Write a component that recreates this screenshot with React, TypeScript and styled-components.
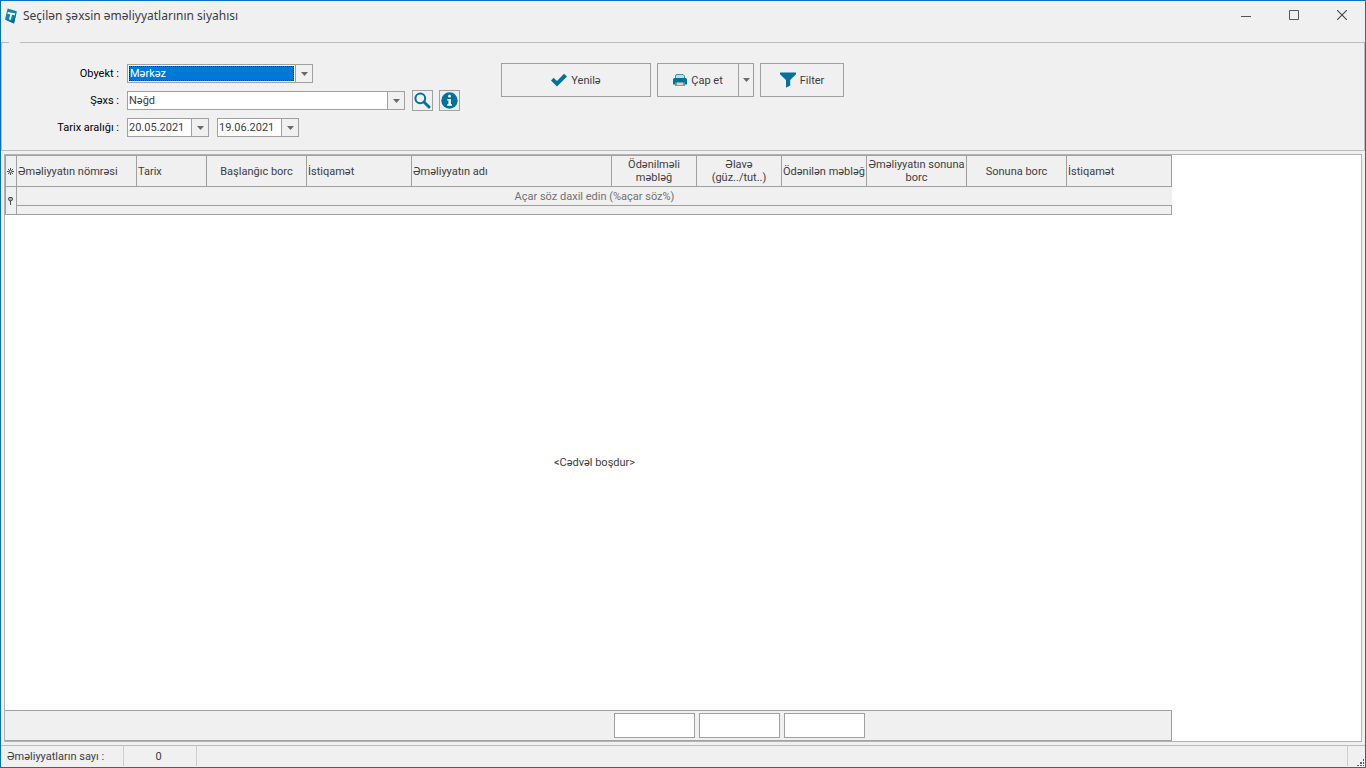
import React from "react";
import styled, { createGlobalStyle, css } from "styled-components";

const LINE = "#a0a0a0";
const SOFT_LINE = "#bcbcbc";
const PANEL = "#f0f0f0";
const TEXT = "#3c3c42";
const ACCENT = "#00739c";

const Global = createGlobalStyle`
  *, *::before, *::after { box-sizing: border-box; }
  body { margin: 0; background: ${PANEL}; }
  body, button, input, select, table {
    font-family: Roboto, "Noto Sans", sans-serif;
    font-size: 11px;
    line-height: 13px;
    color: ${TEXT};
  }
`;

const Window = styled.div`
  display: flex;
  flex-direction: column;
  min-height: 100vh;
  border: 1px solid #0a70c0;
  background: ${PANEL};
`;

const TitleBar = styled.header`
  display: flex;
  align-items: center;
  height: 29px;
  margin-bottom: 12px;
  padding-left: 4px;
`;

const Title = styled.h1`
  flex: 1;
  margin: 0 0 0 6px;
  font: 400 12px/16px "Noto Sans", sans-serif;
`;

const CaptionButton = styled.button`
  display: flex;
  align-items: center;
  justify-content: center;
  width: 48px;
  height: 29px;
  padding: 0 0 2px 2px;
  border: 0;
  background: transparent;
`;

const Group = styled.section`
  position: relative;
  display: flex;
  align-items: flex-start;
  gap: 41px;
  height: 109px;
  padding: 20px 16px 0 0;
  border: 1px solid ${SOFT_LINE};

  &::before {
    content: "";
    position: absolute;
    top: -1px;
    left: 7px;
    width: 11px;
    height: 1px;
    background: ${PANEL};
  }
`;

const Fields = styled.form`
  display: grid;
  grid-template-columns: 117px auto;
  grid-auto-rows: 21px;
  gap: 6px 8px;
  align-items: center;
`;

const Label = styled.label`
  text-align: right;
  color: #000;
`;

const FieldRow = styled.div<{ $gap?: number }>`
  display: flex;
  align-items: center;
  gap: ${(p) => p.$gap ?? 7}px;
`;

const Combo = styled.div<{ $width: number }>`
  display: flex;
  width: ${(p) => p.$width}px;
  height: 19px;
  border: 1px solid ${LINE};
  background: #fff;
`;

const field = css`
  flex: 1;
  min-width: 0;
  padding: 0 0 0 1px;
  border: 0;
  border-radius: 0;
  background: transparent;
  outline: 0;
`;

const Select = styled.select`
  ${field}
  appearance: none;
  margin: 1px;
  padding: 0;
  border: 1px dotted #14202c;
  background: #0078d7;
  color: #fff;
`;

const Input = styled.input`
  ${field}
`;

const DropButton = styled.button`
  display: flex;
  align-items: center;
  justify-content: center;
  width: 17px;
  padding: 0;
  border: 0;
  border-left: 1px solid ${LINE};
  background: ${PANEL};
`;

const IconButton = styled.button`
  display: flex;
  align-items: center;
  justify-content: center;
  width: 21px;
  height: 21px;
  padding: 0;
  border: 1px solid ${LINE};
  background: ${PANEL};
`;

const Actions = styled.div`
  display: flex;
  gap: 6px;
`;

const ActionButton = styled.button<{ $width: number }>`
  display: flex;
  align-items: center;
  justify-content: center;
  gap: 4px;
  width: ${(p) => p.$width}px;
  height: 34px;
  padding: 0;
  border: 1px solid ${LINE};
  background: ${PANEL};
`;

const SplitButton = styled.div`
  display: flex;
  height: 34px;

  & > ${DropButton} {
    width: 15px;
    border: 1px solid ${LINE};
    border-left: 0;
  }
`;

const GridPanel = styled.main`
  display: flex;
  flex: 1;
  flex-direction: column;
  margin: 3px;
  border: 1px solid #b4b4b4;
  background: #fff;
`;

const Table = styled.table`
  table-layout: fixed;
  width: 1167px;
  border-collapse: separate;
  border-spacing: 0;
  border-top: 1px solid ${LINE};
  border-left: 1px solid ${LINE};
  background: ${PANEL};
`;

const Th = styled.th<{ $center?: boolean }>`
  height: 31px;
  padding: 0 0 0 ${(p) => (p.$center ? 0 : 1)}px;
  border-right: 1px solid ${LINE};
  border-bottom: 1px solid ${LINE};
  font-weight: 400;
  text-align: ${(p) => (p.$center ? "center" : "left")};
  vertical-align: middle;
  white-space: pre;
`;

const MarkCell = styled.td`
  padding: 0 0 0 1px;
  border-right: 1px solid ${LINE};
  border-bottom: 1px solid ${LINE};

  svg { display: block; }
`;

const HintCell = styled.td`
  height: 19px;
  padding: 0;
  border-bottom: 1px solid ${LINE};
  color: #707070;
  text-align: center;
`;

const FilterCell = styled.td`
  height: 9px;
  padding: 0;
  border-right: 1px solid ${LINE};
  border-bottom: 1px solid ${LINE};
`;

const EmptyArea = styled.div`
  display: flex;
  flex: 1;
  align-items: center;
  justify-content: center;
  width: 1167px;
  padding-left: 12px;
`;

const TotalsBar = styled.div`
  display: flex;
  gap: 4px;
  width: 1167px;
  height: 31px;
  padding: 2px 0 0 609px;
  border: 1px solid ${LINE};
  border-left: 0;
  background: ${PANEL};
`;

const Total = styled.output`
  width: 81px;
  height: 25px;
  border: 1px solid ${LINE};
  background: #fff;
`;

const StatusBar = styled.footer`
  display: flex;
  height: 22px;
  border-top: 1px solid ${SOFT_LINE};
`;

const StatusCell = styled.div<{ $width?: number; $center?: boolean }>`
  flex: ${(p) => (p.$width ? "none" : "1")};
  width: ${(p) => (p.$width ? `${p.$width}px` : "auto")};
  height: 20px;
  padding: 4px 3px 0 ${(p) => (p.$center ? 0 : 6)}px;
  border-right: 1px solid #cfcfcf;
  text-align: ${(p) => (p.$center ? "center" : "left")};
`;

const Grip = styled.div`
  display: flex;
  align-items: flex-end;
  justify-content: flex-end;
  width: 17px;
  padding: 0 1px 1px 0;
`;

const Arrow = () => (
  <svg width="7" height="4" viewBox="0 0 7 4" aria-hidden="true">
    <path d="M0 0h7L3.5 4z" fill="#6a6a6a" />
  </svg>
);

const AppIcon = () => (
  <svg width="12" height="16" viewBox="0 0 12 16" aria-hidden="true">
    <path d="M2.6 0.4 11.8 3.2 9 15.6 0 11.4z" fill="#0b86ae" />
    <path d="M0 11.4 9 15.6 11.8 3.2 7.8 13z" fill="#076787" />
    <path d="M2.6 4.8 10 6.4M6.4 5.4 4.9 11.6" stroke="#fff" strokeWidth="1.8" fill="none" />
  </svg>
);

const SearchIcon = () => (
  <svg width="17" height="17" viewBox="0 0 17 17" aria-hidden="true">
    <circle cx="6.3" cy="6.3" r="4.9" fill="none" stroke={ACCENT} strokeWidth="2" />
    <path d="M10 10 15 15" stroke={ACCENT} strokeWidth="2.9" strokeLinecap="round" />
  </svg>
);

const InfoIcon = () => (
  <svg width="17" height="17" viewBox="0 0 17 17" aria-hidden="true">
    <circle cx="8.5" cy="8.5" r="8.2" fill={ACCENT} />
    <circle cx="8.5" cy="4.1" r="1.5" fill="#fff" />
    <path d="M6.3 7h3.6v5.2h1.1v1.6H6.2v-1.6h1.2V8.5H6.3z" fill="#fff" />
  </svg>
);

const CheckIcon = () => (
  <svg width="16" height="14" viewBox="0 0 16 14" aria-hidden="true">
    <path d="M0 7.4 2.6 4.8 6 8 13 0.8 16 3.4 6 13.4z" fill={ACCENT} />
  </svg>
);

const PrintIcon = () => (
  <svg width="14" height="14" viewBox="0 0 14 14" aria-hidden="true">
    <path d="M2.5 5.5V3q0-1.5 1.5-1.5h6L11.5 3v2.5" fill="#c3dde6" stroke="#3a8fb0" />
    <path d="M1.5 5h11Q14 5 14 6.5V11.5H0V6.5Q0 5 1.5 5z" fill={ACCENT} />
    <path d="M2 9.5h10V13H2z" fill="#5d9fb8" />
    <path d="M4 9.6h6v2.6H4z" fill="#f6c9a4" />
  </svg>
);

const FunnelIcon = () => (
  <svg width="16" height="16" viewBox="0 0 16 16" aria-hidden="true">
    <path d="M0 0.4h16v1.8L10.2 8v5.6L6 15.8V8L0 2.2z" fill={ACCENT} />
  </svg>
);

const StarMark = () => (
  <svg width="7" height="7" viewBox="0 0 7 7" aria-hidden="true">
    <path d="M3.5 0v2.4M3.5 4.6V7M0 3.5h2.4M4.6 3.5H7M1 1l1.6 1.6M6 1 4.4 2.6M1 6l1.6-1.6M6 6 4.4 4.4" stroke="#444" strokeWidth="1" />
    <circle cx="3.5" cy="3.5" r="1.2" fill="none" stroke="#666" strokeWidth="0.8" />
  </svg>
);

const PinMark = () => (
  <svg width="7" height="8" viewBox="0 0 7 8" aria-hidden="true">
    <path d="M2 0.5h3l0.5 0.8v1.4L4.3 4H2.7L1.5 2.7V1.3z" fill="#aaa" stroke="#4a4a4a" />
    <path d="M3.5 3.5V8" stroke="#4a4a4a" />
  </svg>
);

const GripMark = () => (
  <svg width="7" height="7" viewBox="0 0 7 7" fill="#606060" aria-hidden="true">
    <path d="M6 0h1v2H6zM3 3h2v2H3zM6 3h1v2H6zM0 6h2v1H0zM3 6h2v1H3zM6 6h1v1H6z" />
  </svg>
);

const columns = [
  { title: "Əməliyyatın nömrəsi", width: 120 },
  { title: "Tarix", width: 70 },
  { title: "Başlanğıc borc", width: 100, center: true },
  { title: "İstiqamət", width: 105 },
  { title: "Əməliyyatın adı", width: 200 },
  { title: "Ödənilməli\nməbləğ", width: 85, center: true },
  { title: "Əlavə\n(güz../tut..)", width: 85, center: true },
  { title: "Ödənilən məbləğ", width: 85, center: true },
  { title: "Əməliyyatın sonuna\nborc", width: 100, center: true },
  { title: "Sonuna borc", width: 100, center: true },
  { title: "İstiqamət", width: 105 },
];

const DateBox = ({ id, value, label }: { id: string; value: string; label: string }) => (
  <Combo $width={82}>
    <Input id={id} aria-label={label} defaultValue={value} />
    <DropButton type="button" aria-label={`${label} seç`}>
      <Arrow />
    </DropButton>
  </Combo>
);

export default function App() {
  return (
    <>
      <Global />
      <Window>
        <TitleBar>
          <AppIcon />
          <Title>Seçilən şəxsin əməliyyatlarının siyahısı</Title>
          <CaptionButton aria-label="Kiçilt">
            <svg width="10" height="10" viewBox="0 0 10 10">
              <path d="M0 6.5h10" stroke="#555" />
            </svg>
          </CaptionButton>
          <CaptionButton aria-label="Böyüt">
            <svg width="10" height="10" viewBox="0 0 10 10">
              <path d="M0.5 0.5h9v9h-9z" fill="none" stroke="#555" />
            </svg>
          </CaptionButton>
          <CaptionButton aria-label="Bağla">
            <svg width="10" height="10" viewBox="0 0 10 10">
              <path d="M0 0 10 10M10 0 0 10" stroke="#444" strokeWidth="1.1" />
            </svg>
          </CaptionButton>
        </TitleBar>

        <Group>
          <Fields>
            <Label htmlFor="object">Obyekt :</Label>
            <FieldRow>
              <Combo $width={186}>
                <Select id="object" defaultValue="Mərkəz">
                  <option>Mərkəz</option>
                </Select>
                <DropButton type="button" aria-label="Obyekt seç">
                  <Arrow />
                </DropButton>
              </Combo>
            </FieldRow>

            <Label htmlFor="person">Şəxs :</Label>
            <FieldRow>
              <Combo $width={278}>
                <Input id="person" defaultValue="Nəğd" />
                <DropButton type="button" aria-label="Şəxs seç">
                  <Arrow />
                </DropButton>
              </Combo>
              <FieldRow $gap={6}>
                <IconButton type="button" aria-label="Axtar">
                  <SearchIcon />
                </IconButton>
                <IconButton type="button" aria-label="Məlumat">
                  <InfoIcon />
                </IconButton>
              </FieldRow>
            </FieldRow>

            <Label htmlFor="from">Tarix aralığı :</Label>
            <FieldRow $gap={8}>
              <DateBox id="from" value="20.05.2021" label="Başlanğıc tarix" />
              <DateBox id="to" value="19.06.2021" label="Son tarix" />
            </FieldRow>
          </Fields>

          <Actions>
            <ActionButton $width={150}>
              <CheckIcon />
              Yenilə
            </ActionButton>
            <SplitButton>
              <ActionButton $width={82}>
                <PrintIcon />
                Çap et
              </ActionButton>
              <DropButton aria-label="Çap seçimləri">
                <Arrow />
              </DropButton>
            </SplitButton>
            <ActionButton $width={84}>
              <FunnelIcon />
              Filter
            </ActionButton>
          </Actions>
        </Group>

        <GridPanel>
          <Table>
            <colgroup>
              <col style={{ width: 11 }} />
              {columns.map((c, i) => (
                <col key={i} style={{ width: c.width }} />
              ))}
            </colgroup>
            <thead>
              <tr>
                <MarkCell>
                  <StarMark />
                </MarkCell>
                {columns.map((c, i) => (
                  <Th key={i} $center={c.center} scope="col">
                    {c.title}
                  </Th>
                ))}
              </tr>
            </thead>
            <tbody>
              <tr>
                <MarkCell rowSpan={2}>
                  <PinMark />
                </MarkCell>
                <HintCell colSpan={11}>Açar söz daxil edin (%açar söz%)</HintCell>
              </tr>
              <tr>
                <FilterCell colSpan={11} />
              </tr>
            </tbody>
          </Table>
          <EmptyArea>&lt;Cədvəl boşdur&gt;</EmptyArea>
          <TotalsBar>
            <Total />
            <Total />
            <Total />
          </TotalsBar>
        </GridPanel>

        <StatusBar>
          <StatusCell $width={123}>Əməliyyatların sayı :</StatusCell>
          <StatusCell $width={73} $center>
            0
          </StatusCell>
          <StatusCell />
          <Grip>
            <GripMark />
          </Grip>
        </StatusBar>
      </Window>
    </>
  );
}
